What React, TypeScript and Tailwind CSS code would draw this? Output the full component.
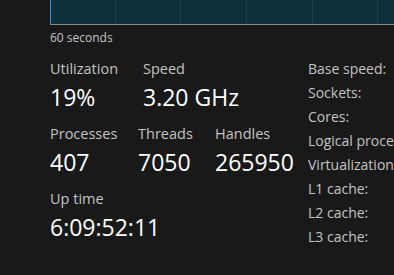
import React from 'react'

const font = { fontFamily: '"Open Sans", "Noto Sans", sans-serif' }

function Stat({ label, value, width }: { label: string; value: string; width: string }) {
    return (
        <div className={`${width} shrink-0 flex flex-col`}>
            <span className="text-[14.5px] leading-[20px] text-[#c4c4c4]">{label}</span>
            <span className="text-[23px] leading-[30px] text-white mt-[3px]">{value}</span>
        </div>
    )
}

function App() {
    const specs = ['Base speed:', 'Sockets:', 'Cores:', 'Logical processors:', 'Virtualization:', 'L1 cache:', 'L2 cache:', 'L3 cache:']

    return (
        <div className="w-[394px] h-[275px] bg-[#191919] overflow-hidden pl-[50px]" style={font}>
            {/* graph tail */}
            <div className="flex h-[25px] w-[400px] bg-[#0f2f3a] border-l border-l-[#1aa3d4] border-b border-b-[#8a8a8a]">
                <div className="w-[65px] shrink-0 border-r border-r-[#1d3f4a]"></div>
                <div className="w-[65px] shrink-0 border-r border-r-[#1d3f4a]"></div>
                <div className="w-[66px] shrink-0 border-r border-r-[#1d3f4a]"></div>
                <div className="w-[66px] shrink-0 border-r border-r-[#1d3f4a]"></div>
                <div className="w-[65px] shrink-0 border-r border-r-[#1d3f4a]"></div>
            </div>
            <div className="text-[12px] leading-[16px] text-[#c4c4c4] mt-[5px]">60 seconds</div>

            <div className="flex mt-[13px]">
                <div className="w-[258px] shrink-0 flex flex-col gap-[12px]">
                    <div className="flex">
                        <Stat label="Utilization" value="19%" width="w-[93px]" />
                        <Stat label="Speed" value="3.20 GHz" width="w-[120px]" />
                    </div>
                    <div className="flex">
                        <Stat label="Processes" value="407" width="w-[88px]" />
                        <Stat label="Threads" value="7050" width="w-[77px]" />
                        <Stat label="Handles" value="265950" width="w-[90px]" />
                    </div>
                    <div className="flex">
                        <Stat label="Up time" value="6:09:52:11" width="w-[150px]" />
                    </div>
                </div>
                <div className="flex flex-col whitespace-nowrap">
                    {specs.map((s) => (
                        <span key={s} className="text-[14px] leading-[20px] h-[24px] text-[#c4c4c4]">{s}</span>
                    ))}
                </div>
            </div>
        </div>
    )
}

export default App
